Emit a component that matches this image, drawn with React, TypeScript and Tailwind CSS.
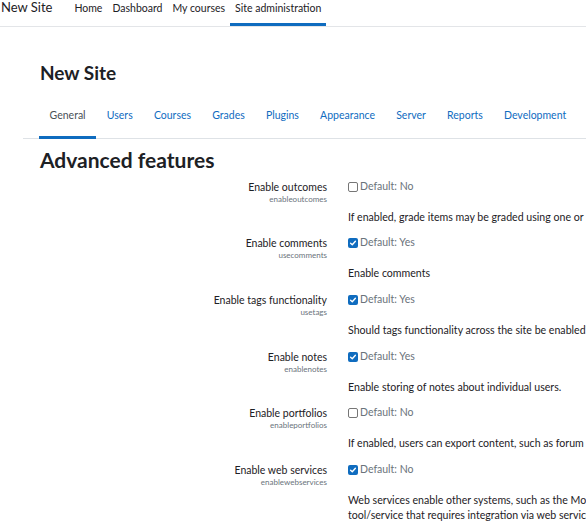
import React from 'react';

interface Setting {
  label: string;
  name: string;
  checked: boolean;
  defaultText: string;
  description: string[];
}

const settings: Setting[] = [
  {
    label: 'Enable outcomes',
    name: 'enableoutcomes',
    checked: false,
    defaultText: 'Default: No',
    description: ['If enabled, grade items may be graded using one or more scales tied to outcome statements.'],
  },
  {
    label: 'Enable comments',
    name: 'usecomments',
    checked: true,
    defaultText: 'Default: Yes',
    description: ['Enable comments'],
  },
  {
    label: 'Enable tags functionality',
    name: 'usetags',
    checked: true,
    defaultText: 'Default: Yes',
    description: ['Should tags functionality across the site be enabled?'],
  },
  {
    label: 'Enable notes',
    name: 'enablenotes',
    checked: true,
    defaultText: 'Default: Yes',
    description: ['Enable storing of notes about individual users.'],
  },
  {
    label: 'Enable portfolios',
    name: 'enableportfolios',
    checked: false,
    defaultText: 'Default: No',
    description: ['If enabled, users can export content, such as forum posts and assignment submissions, to external portfolios.'],
  },
  {
    label: 'Enable web services',
    name: 'enablewebservices',
    checked: true,
    defaultText: 'Default: No',
    description: [
      'Web services enable other systems, such as the Moodle app, to log in to the site and perform operations.',
      'tool/service that requires integration via web services.',
    ],
  },
];

const topNav = ['Home', 'Dashboard', 'My courses', 'Site administration'];
const tabs = ['General', 'Users', 'Courses', 'Grades', 'Plugins', 'Appearance', 'Server', 'Reports', 'Development'];

function Checkbox({ checked }: { checked: boolean }) {
  if (checked) {
    return (
      <span className="flex h-[10px] w-[10px] shrink-0 items-center justify-center rounded-[2px] bg-[#0f6cbf]">
        <svg viewBox="0 0 10 10" className="h-[8px] w-[8px]">
          <path d="M2 5.2 L4.1 7.2 L8 2.8" fill="none" stroke="white" strokeWidth="1.7" strokeLinecap="round" strokeLinejoin="round" />
        </svg>
      </span>
    );
  }
  return <span className="h-[10px] w-[10px] shrink-0 rounded-[2px] border border-[#767676] bg-white" />;
}

export default function App() {
  return (
    <div className="h-[523px] w-[586px] overflow-hidden bg-white text-[#1d2125]" style={{ fontFamily: 'Lato, sans-serif' }}>
      {/* Top navbar */}
      <nav className="flex h-[27px] items-stretch border-b border-[#e3e5e8]">
        <div className="pl-[1px] pr-[17px] text-[13px] leading-[15px]">New Site</div>
        <ul className="flex items-stretch text-[10.5px] leading-[14px]">
          {topNav.map((item) => (
            <li
              key={item}
              className={
                item === 'Site administration'
                  ? 'border-b-[3px] border-[#0f6cbf] px-[5px] pt-[1px]'
                  : 'px-[5px] pt-[1px]'
              }
            >
              {item}
            </li>
          ))}
        </ul>
      </nav>

      <main className="pt-[36px]">
        <h1 className="pl-[40px] text-[19px] font-bold leading-none">New Site</h1>

        {/* Tabs */}
        <div className="ml-[23px] mt-[21px] flex border-b border-[#dee2e6] pl-[16px] text-[10.5px]">
          {tabs.map((tab) => (
            <div
              key={tab}
              className={
                tab === 'General'
                  ? '-mb-[1px] border-b-[3px] border-[#0f6cbf] px-[10.6px] pb-[12px] pt-[5px] text-[#495057]'
                  : 'px-[10.6px] pb-[12px] pt-[5px] text-[#0f6cbf]'
              }
            >
              {tab}
            </div>
          ))}
        </div>

        <h2 className="mt-[10px] pl-[40px] text-[21px] font-bold leading-none">Advanced features</h2>

        <div className="mt-[10px] pl-[40px]">
          {settings.map((s) => (
            <div key={s.name} className="grid grid-cols-[287px_1fr] gap-x-[21px] pb-[11.6px]">
              <div className="text-right">
                <div className="text-[10.5px] leading-[14px]">{s.label}</div>
                <div className="text-[8px] leading-[10px] text-[#6a737b]">{s.name}</div>
              </div>
              <div className="whitespace-nowrap">
                <div className="flex h-[14px] items-center gap-[2px] text-[10.5px] text-[#6a737b]">
                  <Checkbox checked={s.checked} />
                  <span>{s.defaultText}</span>
                </div>
                <div className="mt-[16px] text-[10.6px] leading-[15px]">
                  {s.description.map((line) => (
                    <div key={line}>{line}</div>
                  ))}
                </div>
              </div>
            </div>
          ))}
        </div>
      </main>
    </div>
  );
}
